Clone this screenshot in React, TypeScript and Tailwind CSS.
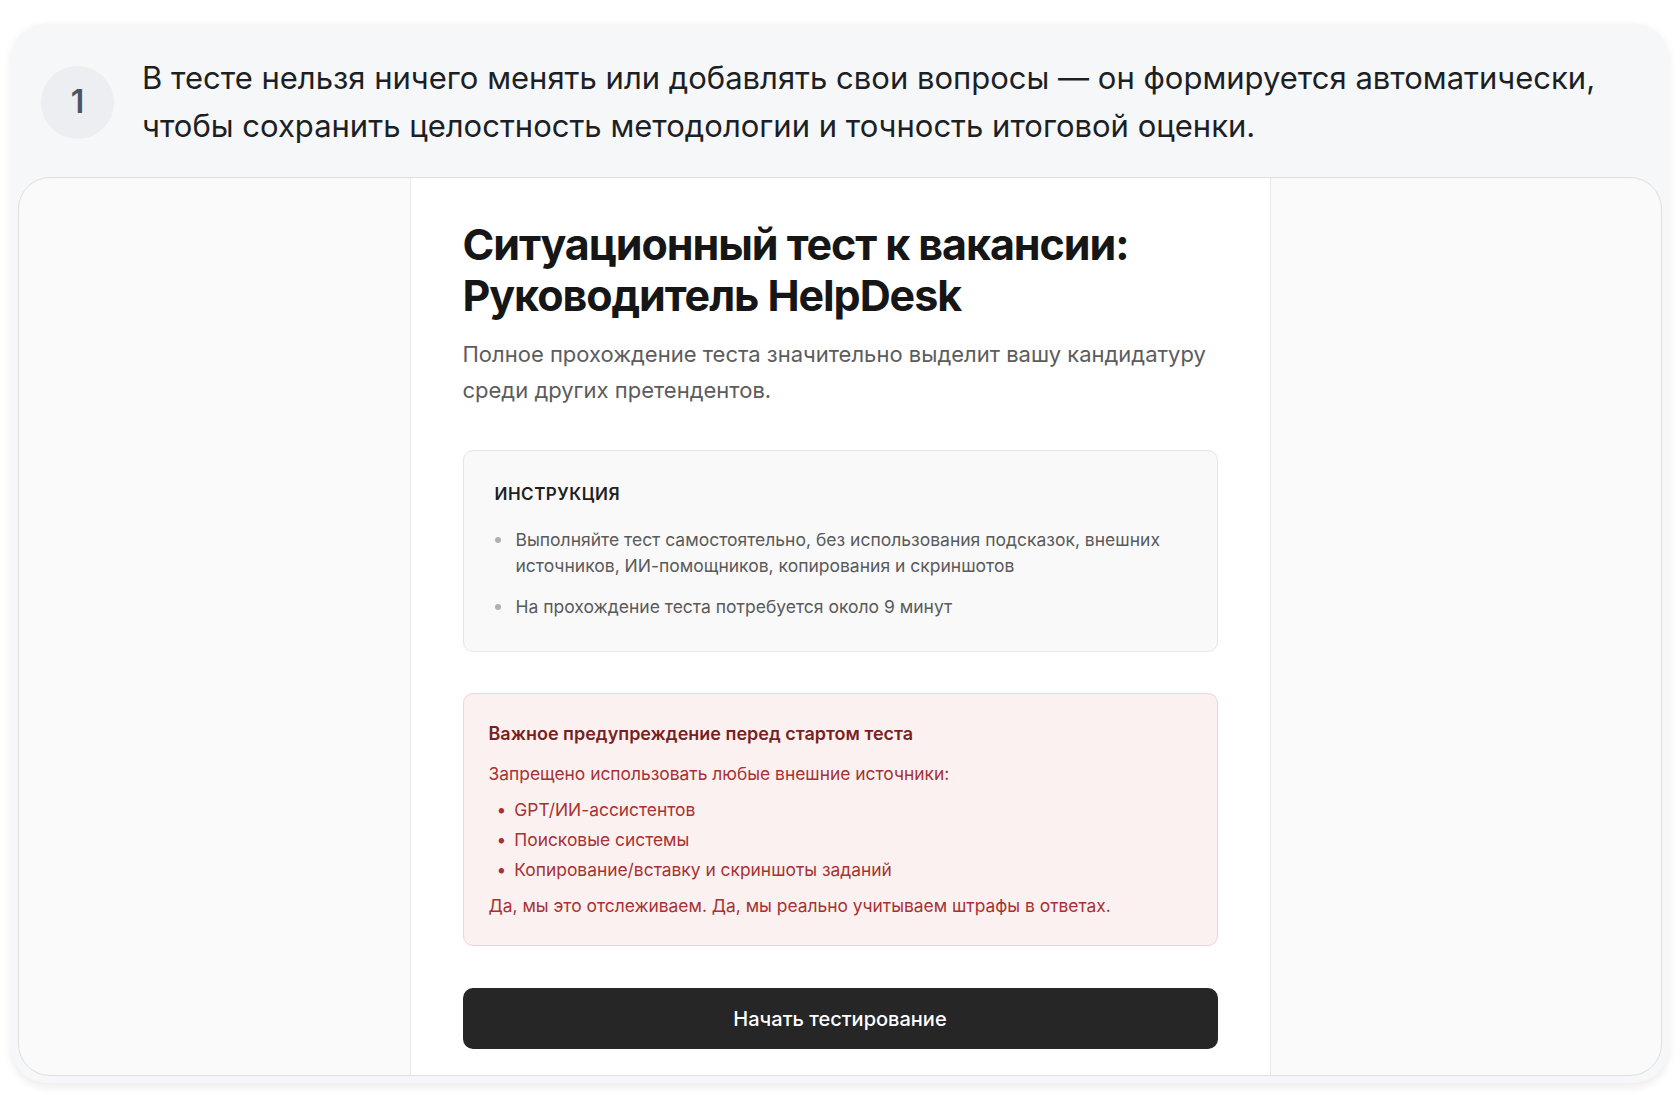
import React from "react";

const rules = [
  "Выполняйте тест самостоятельно, без использования подсказок, внешних источников, ИИ-помощников, копирования и скриншотов",
  "На прохождение теста потребуется около 9 минут",
];

const banned = ["GPT/ИИ-ассистентов", "Поисковые системы", "Копирование/вставку и скриншоты заданий"];

const TestPreview = () => {
  return (
    <div className="h-[899px] overflow-hidden rounded-[32px] border border-[#dcdfe3] bg-[#fafafa] flex justify-center">
      <div className="w-[861px] shrink-0 border-x border-[#e9e9e9] bg-white px-[52px] pt-[41px]">
        <h1 className="text-[43px] font-bold leading-[51px] tracking-[-0.025em] text-[#161616]">
          Ситуационный тест к вакансии:
          <br />
          Руководитель HelpDesk
        </h1>
        <p className="mt-[15px] text-[22px] leading-[36px] text-[#5c5c5c]">
          Полное прохождение теста значительно выделит вашу кандидатуру среди других претендентов.
        </p>

        <div className="mt-[42px] rounded-[10px] border border-[#e6e6e6] bg-[#f9f9f9] px-[31px] pt-[31px] pb-[31px]">
          <div className="text-[17px] font-semibold uppercase leading-[24px] tracking-[0.03em] text-[#1f1f1f]">
            Инструкция
          </div>
          <ul className="mt-[21px] flex flex-col gap-[15px]">
            {rules.map((r) => (
              <li key={r} className="flex gap-[15px] text-[17.5px] leading-[26px] text-[#5a5a5a]">
                <span className="mt-[10px] h-[6px] w-[6px] shrink-0 rounded-full bg-[#b0b0b0]" />
                <span>{r}</span>
              </li>
            ))}
          </ul>
        </div>

        <div className="mt-[41px] rounded-[10px] border border-[#f3d3d3] bg-[#fcf1f1] px-[25px] pt-[28px] pb-[27px] text-[17.4px] leading-[24px]">
          <div className="text-[18px] font-semibold text-[#7a1f1f]">Важное предупреждение перед стартом теста</div>
          <div className="mt-[16px] text-[#a83232]">Запрещено использовать любые внешние источники:</div>
          <ul className="mt-[12px] flex flex-col gap-[6px] pl-[8px]">
            {banned.map((b) => (
              <li key={b} className="flex gap-[8px] text-[#a83232]">
                <span>•</span>
                <span>{b}</span>
              </li>
            ))}
          </ul>
          <div className="mt-[12px] text-[#a83232]">Да, мы это отслеживаем. Да, мы реально учитываем штрафы в ответах.</div>
        </div>

        <button className="mt-[42px] flex h-[61px] w-full items-center justify-center rounded-[10px] bg-[#262626] text-[20px] font-medium text-white">
          Начать тестирование
        </button>
      </div>
    </div>
  );
};

export default function App() {
  return (
    <div
      className="h-[1095px] overflow-hidden bg-white px-[11px] pt-[23px]"
      style={{ fontFamily: "Inter, 'Noto Sans', sans-serif" }}
    >
      <div className="rounded-[36px] bg-[#f6f7f9] px-[7px] pb-[7px] shadow-[0_4px_10px_rgba(0,0,0,0.08)]">
        <div className="flex items-center gap-[28px] pl-[23px] pr-[30px] pt-[31px] pb-[27px]">
          <div className="flex h-[73px] w-[73px] shrink-0 items-center justify-center rounded-full bg-[#eceef1] text-[32px] font-semibold text-[#4b5563]">
            1
          </div>
          <p className="text-[31px] leading-[48px] text-[#1c1f24]">
            В тесте нельзя ничего менять или добавлять свои вопросы — он формируется автоматически, чтобы сохранить целостность методологии и точность итоговой оценки.
          </p>
        </div>
        <TestPreview />
      </div>
    </div>
  );
}
